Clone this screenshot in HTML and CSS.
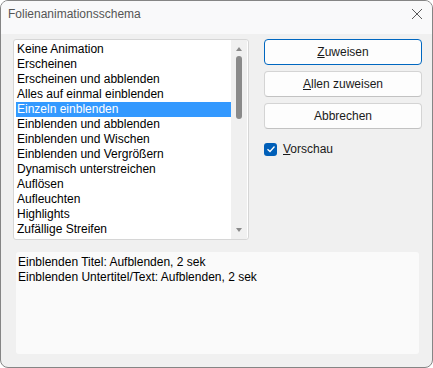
FILE: index.html
```html
<!DOCTYPE html>
<html lang="de">
<head>
    <meta charset="UTF-8">
    <meta name="viewport" content="width=device-width, initial-scale=1.0">
    <title>Folienanimationsschema</title>
    <link rel="stylesheet" href="styles.css">
</head>
<body>
    <div class="window">
        <div class="titlebar">
            <span class="title">Folienanimationsschema</span>
            <svg class="close" width="12" height="12" viewBox="0 0 12 12">
                <path d="M1 1 L11 11 M11 1 L1 11" stroke="#5a5a5a" stroke-width="1" fill="none"/>
            </svg>
        </div>
        <div class="content">
            <div class="top-row">
                <div class="listbox">
                    <ul class="items">
                        <li>Keine Animation</li>
                        <li>Erscheinen</li>
                        <li>Erscheinen und abblenden</li>
                        <li>Alles auf einmal einblenden</li>
                        <li class="selected">Einzeln einblenden</li>
                        <li>Einblenden und abblenden</li>
                        <li>Einblenden und Wischen</li>
                        <li>Einblenden und Vergrößern</li>
                        <li>Dynamisch unterstreichen</li>
                        <li>Auflösen</li>
                        <li>Aufleuchten</li>
                        <li>Highlights</li>
                        <li>Zufällige Streifen</li>
                    </ul>
                    <div class="scrollbar">
                        <span class="arrow up"></span>
                        <span class="thumb"></span>
                        <span class="arrow down"></span>
                    </div>
                </div>
                <div class="actions">
                    <button class="btn default"><u>Z</u>uweisen</button>
                    <button class="btn"><u>A</u>llen zuweisen</button>
                    <button class="btn">Abbrechen</button>
                    <label class="check">
                        <span class="box">
                            <svg width="10" height="10" viewBox="0 0 10 10">
                                <path d="M1.5 5.2 L4 7.5 L8.5 2.5" stroke="#fff" stroke-width="1.3" fill="none"/>
                            </svg>
                        </span>
                        <span><u>V</u>orschau</span>
                    </label>
                </div>
            </div>
            <div class="description">
                Einblenden Titel: Aufblenden, 2 sek<br>
                Einblenden Untertitel/Text: Aufblenden, 2 sek
            </div>
        </div>
    </div>
</body>
</html>
```

FILE: styles.css
```css
body {
    margin: 0;
    background: #ffffff;
    font-family: "Liberation Sans", Arial, sans-serif;
    font-size: 12px;
    color: #000;
}
.window {
    width: 433px;
    height: 368px;
    box-sizing: border-box;
    border: 1px solid #858585;
    border-radius: 8px;
    background: #f0f0f0;
    overflow: hidden;
}
.titlebar {
    height: 33px;
    background: #f9f9fa;
    display: flex;
    align-items: center;
    justify-content: space-between;
    padding: 0 9px 0 7px;
}
.title {
    color: #555;
    margin-top: -7px;
}
.close {
    margin-top: -7px;
}
.content {
    padding: 5px 10px 0 12px;
}
.top-row {
    display: flex;
    gap: 15px;
}
.listbox {
    width: 236px;
    height: 201px;
    box-sizing: border-box;
    border: 1px solid #d6d6d6;
    border-radius: 3px;
    background: #fff;
    display: flex;
    overflow: hidden;
}
.items {
    list-style: none;
    margin: 0;
    padding: 2px 0 0 2px;
    flex: 1;
}
.items li {
    height: 15px;
    line-height: 15px;
    padding-left: 1px;
    white-space: nowrap;
}
.items li.selected {
    background: #3399ff;
    color: #fff;
}
.scrollbar {
    width: 16px;
    margin-right: 1px;
    background: #f0f0f0;
    display: flex;
    flex-direction: column;
    align-items: center;
    padding: 7px 0;
    box-sizing: border-box;
}
.arrow {
    width: 0;
    height: 0;
    border-left: 3.5px solid transparent;
    border-right: 3.5px solid transparent;
}
.arrow.up {
    border-bottom: 4px solid #8a8a8a;
}
.arrow.down {
    border-top: 4px solid #8a8a8a;
    margin-top: auto;
}
.thumb {
    width: 6px;
    height: 63px;
    margin-top: 5px;
    border-radius: 3px;
    background: #8a8a8a;
}
.actions {
    width: 158px;
    display: flex;
    flex-direction: column;
    gap: 6px;
}
.btn {
    height: 26px;
    border: 1px solid #d4d4d4;
    border-bottom-color: #c2c2c2;
    border-radius: 4px;
    background: #fdfdfd;
    font-family: inherit;
    font-size: 12px;
    color: #1a1a1a;
    padding: 0;
}
.btn.default {
    border-color: #0067c0;
}
.check {
    display: flex;
    align-items: center;
    gap: 6px;
    margin-top: 7px;
    color: #1a1a1a;
}
.box {
    width: 13px;
    height: 13px;
    border-radius: 3px;
    background: #005fb8;
    display: flex;
    align-items: center;
    justify-content: center;
}
.description {
    width: 403px;
    height: 102px;
    box-sizing: border-box;
    margin: 12px 0 0 3px;
    padding: 3px 2px;
    border-radius: 3px;
    background: #fafafa;
    line-height: 15px;
}
```
